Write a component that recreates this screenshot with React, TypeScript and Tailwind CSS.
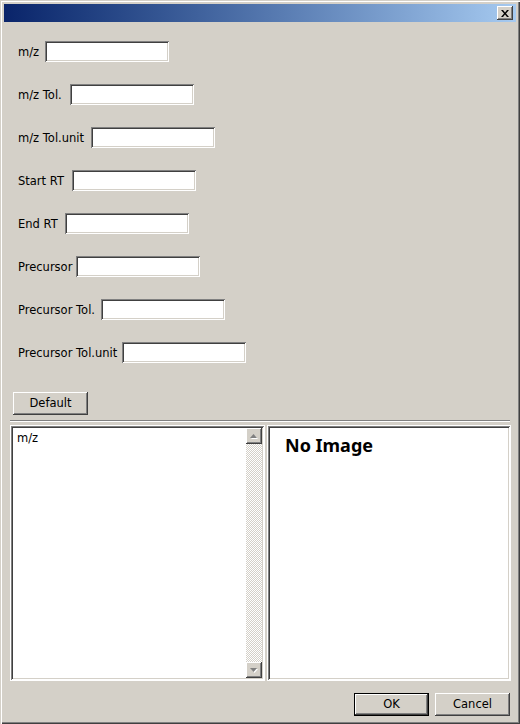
import type { ReactNode } from 'react'

// Windows classic bevels, written as inset box-shadows
const RAISED =
  'shadow-[inset_-1px_-1px_#404040,inset_1px_1px_#ffffff,inset_-2px_-2px_#808080,inset_2px_2px_#d4d0c8]'
const SUNKEN =
  'shadow-[inset_1px_1px_#808080,inset_-1px_-1px_#ffffff,inset_2px_2px_#404040,inset_-2px_-2px_#d4d0c8]'

const FIELDS = [
  { label: 'm/z', w: 'w-[27px]' },
  { label: 'm/z Tol.', w: 'w-[52px]' },
  { label: 'm/z Tol.unit', w: 'w-[73px]' },
  { label: 'Start RT', w: 'w-[54px]' },
  { label: 'End RT', w: 'w-[47px]' },
  { label: 'Precursor', w: 'w-[58px]' },
  { label: 'Precursor Tol.', w: 'w-[83px]' },
  { label: 'Precursor Tol.unit', w: 'w-[104px]' },
]

function Button({ children, isDefault }: { children: ReactNode; isDefault?: boolean }) {
  if (isDefault) {
    return (
      <div className="w-[75px] h-[23px] border border-black">
        <button className={`w-full h-full flex items-center justify-center bg-[#d4d0c8] text-black ${RAISED}`}>
          {children}
        </button>
      </div>
    )
  }
  return (
    <button className={`w-[75px] h-[23px] flex items-center justify-center bg-[#d4d0c8] text-black ${RAISED}`}>
      {children}
    </button>
  )
}

function Arrow({ down }: { down?: boolean }) {
  return (
    <div className={`w-[16px] h-[16px] bg-[#d4d0c8] flex items-center justify-center ${RAISED}`}>
      <svg width="8" height="5" viewBox="0 0 8 5">
        {down ? (
          <>
            <path d="M1 1h7L4.5 5z" fill="#ffffff" />
            <path d="M0 0h7L3.5 4z" fill="#808080" />
          </>
        ) : (
          <>
            <path d="M1 5h7L4.5 1z" fill="#ffffff" />
            <path d="M0 4h7L3.5 0z" fill="#808080" />
          </>
        )}
      </svg>
    </div>
  )
}

export default function App() {
  return (
    <div
      className="w-[520px] h-[724px] bg-[#d4d0c8] p-[4px] flex flex-col text-[11.5px] text-black shadow-[inset_1px_1px_#d4d0c8,inset_2px_2px_#ffffff,inset_-1px_-1px_#404040,inset_-2px_-2px_#808080]"
      style={{ fontFamily: '"DejaVu Sans", Tahoma, sans-serif' }}
    >
      {/* title bar */}
      <div className="h-[18px] flex items-center justify-end pr-[3px] bg-gradient-to-r from-[#0a246a] to-[#a6caf0]">
        <div className={`w-[16px] h-[14px] bg-[#d4d0c8] flex items-center justify-center ${RAISED}`}>
          <svg width="8" height="7" viewBox="0 0 8 7">
            <path d="M0 0h2l2 2.5L6 0h2L5 3.5 8 7H6L4 4.5 2 7H0l3-3.5z" fill="#000" />
          </svg>
        </div>
      </div>

      <div className="flex flex-col gap-[22px] pt-[19px] pl-[14px]">
        {FIELDS.map((f) => (
          <div key={f.label} className="flex items-center h-[21px]">
            <span className={`${f.w} pt-[2px] whitespace-nowrap`}>{f.label}</span>
            <div className={`w-[124px] h-[21px] bg-white ${SUNKEN}`} />
          </div>
        ))}
      </div>

      <div className="mt-[29px] ml-[9px]">
        <button className={`w-[75px] h-[23px] flex items-center justify-center bg-[#d4d0c8] ${RAISED}`}>
          Default
        </button>
      </div>

      <div className="mt-[5px] mx-[6px] h-[2px] border-t border-[#808080] border-b border-b-white" />

      <div className="mt-[3px] ml-[6px] mr-[5px] h-[256px] flex gap-[2px]">
        <div className="w-[255px] h-full border border-white">
          <div className={`w-full h-full p-[2px] bg-white ${SUNKEN}`}>
            <div className="h-full flex">
              <div className="flex-1 pl-[4px] pt-[4px] leading-[13px]">m/z</div>
              <div className="w-[16px] h-full flex flex-col bg-[repeating-conic-gradient(#d4d0c8_0_25%,#ffffff_0_50%)] bg-[length:2px_2px]">
                <Arrow />
                <div className="flex-1" />
                <Arrow down />
              </div>
            </div>
          </div>
        </div>
        <div className="flex-1 h-full border border-white">
          <div className={`w-full h-full p-[2px] bg-white ${SUNKEN}`}>
            <div
              className="pl-[15px] pt-[5px] text-[18px] leading-[24px] font-bold"
              style={{ fontFamily: '"Noto Sans", "Open Sans", sans-serif' }}
            >
              No Image
            </div>
          </div>
        </div>
      </div>

      <div className="mt-[12px] mr-[6px] flex justify-end gap-[6px]">
        <Button isDefault>OK</Button>
        <Button>Cancel</Button>
      </div>
    </div>
  )
}
